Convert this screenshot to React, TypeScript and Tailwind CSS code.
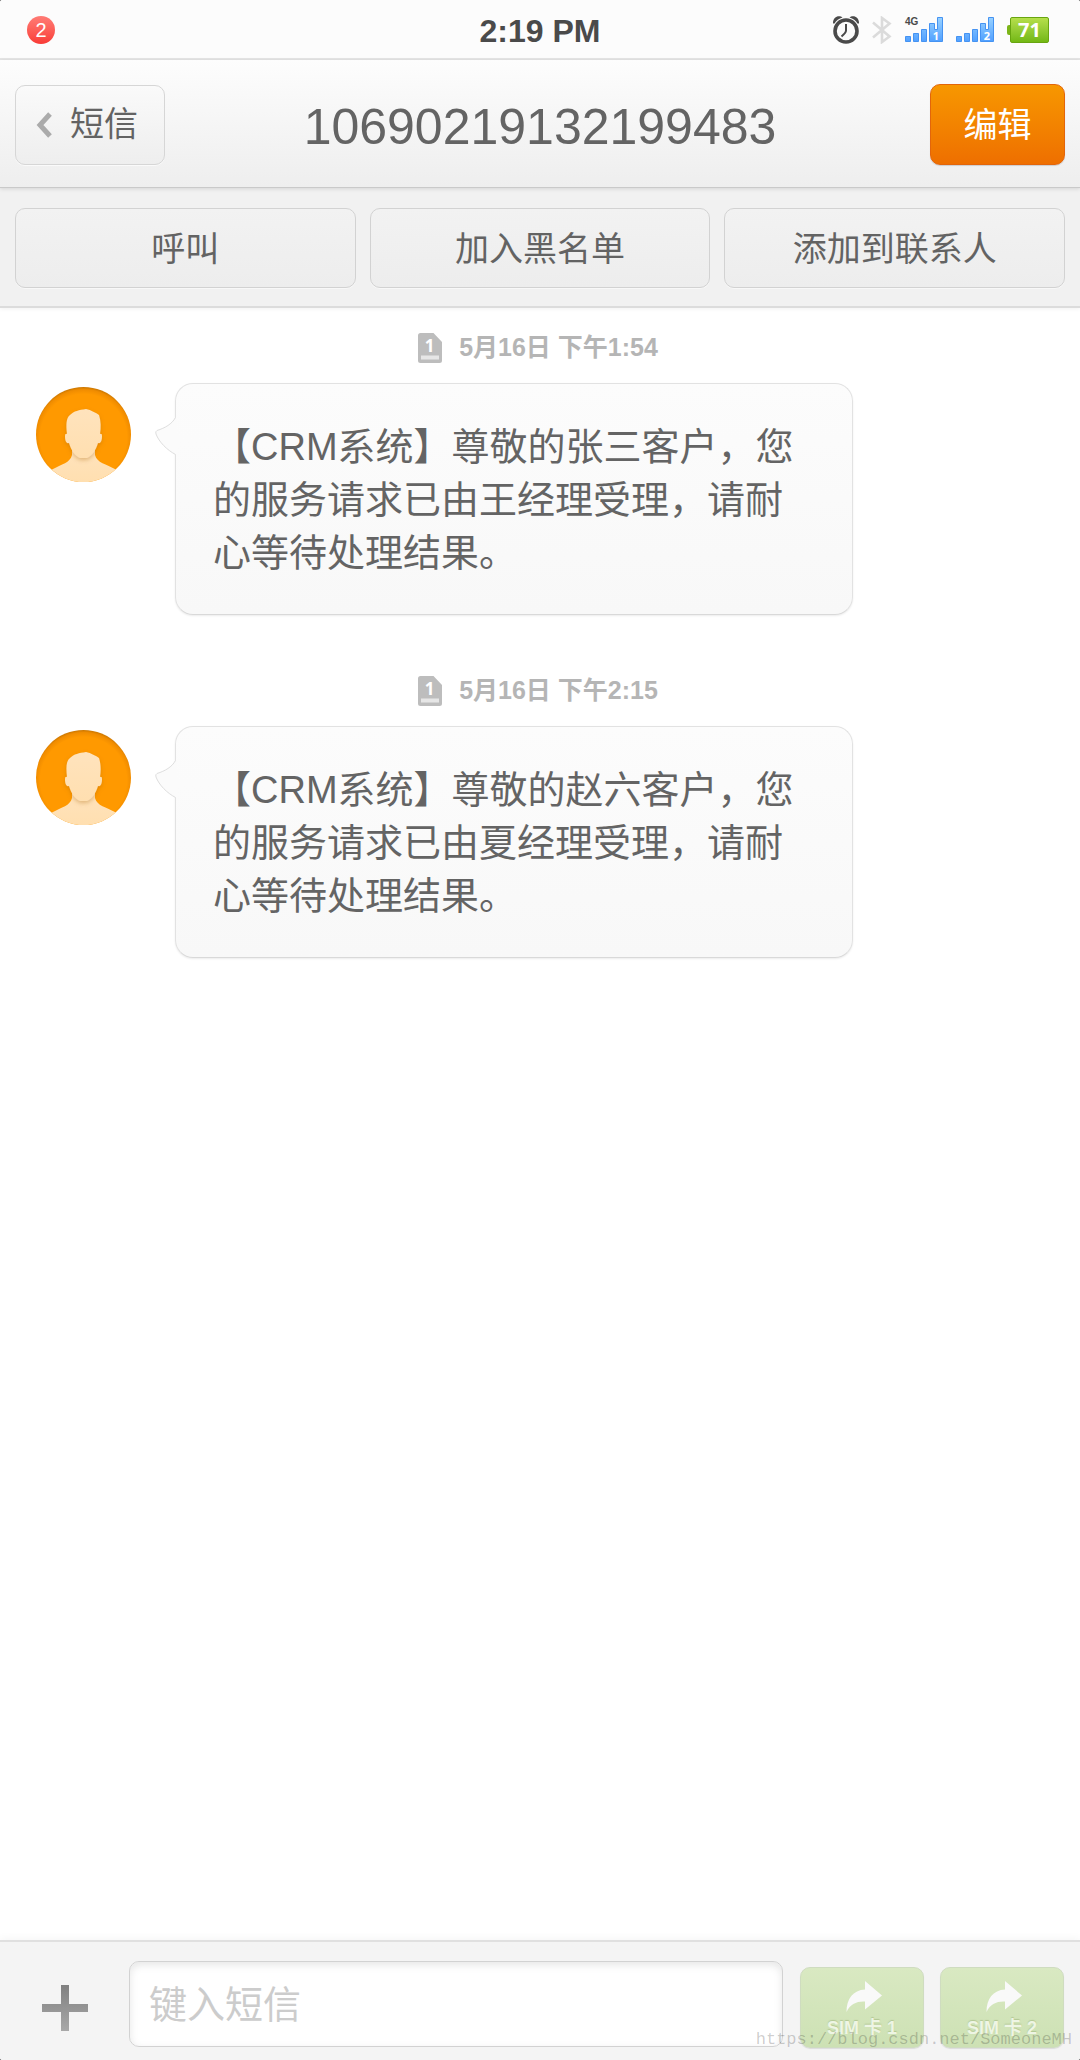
import { Fragment } from "react"

const messages = [
    {
        id: 1,
        date: "5月16日 下午1:54",
        text: "【CRM系统】尊敬的张三客户，您的服务请求已由王经理受理，请耐心等待处理结果。"
    },
    {
        id: 2,
        date: "5月16日 下午2:15",
        text: "【CRM系统】尊敬的赵六客户，您的服务请求已由夏经理受理，请耐心等待处理结果。"
    }
]

const actions = ["呼叫", "加入黑名单", "添加到联系人"]

function AlarmIcon() {
    return (
        <svg className="h-7 w-[26px]" viewBox="0 0 26 28" fill="none" stroke="#4a4a4a" aria-hidden="true">
            <path d="M0 7.5C-.3 2.5 3.5-.8 8 .6L9.500 1.500C6 2.500 3 4.500 1.500 7.500ZM26 7.500C26.300 2.500 22.500-.8 18 .6L16.500 1.500C20 2.500 23 4.500 24.500 7.500Z" fill="#4a4a4a" stroke="none" />
            <circle cx="13" cy="15" r="11" strokeWidth="3.600" />
            <path d="M13 8v6.500c0 2-1.500 3.500-4.500 6" strokeWidth="2" />
        </svg>
    )
}

function BluetoothIcon() {
    return (
        <svg className="h-7 w-5" viewBox="0 0 20 28" fill="none" stroke="#dbdbdb" strokeWidth="2.600" aria-hidden="true">
            <path d="M1 6.500L17.500 20.500L10 26V2L17.500 7.500L1 21.500" />
        </svg>
    )
}

function SignalIcon({ sim, network }: { sim: number; network?: string }) {
    return (
        <svg className="h-[26px] w-[38px] overflow-visible" viewBox="0 0 38 26" role="img" aria-label={`SIM ${sim}`}>
            <defs>
                <linearGradient id={`signal-${sim}`} x1="0" y1="0" x2="0" y2="26" gradientUnits="userSpaceOnUse">
                    <stop offset="0" stopColor="#9bd3ff" />
                    <stop offset="1" stopColor="#4c9dff" />
                </linearGradient>
            </defs>
            <path
                d="M.5 19.500h5v5h-5zM8.500 16.500h5v8h-5zM16.500 12.500h5v12h-5zM24.500 6.500h5v6h3v-12h5v24h-13z"
                fill={`url(#signal-${sim})`}
                stroke="#4593f2"
                strokeWidth="1"
            />
            <text x="31" y="23" textAnchor="middle" fill="#fff" className="font-['Noto_Sans',sans-serif] text-[11px] font-bold">{sim}</text>
            {network && <text x="0" y="8" fill="#4a4a4a" className="text-[10px] font-bold">{network}</text>}
        </svg>
    )
}

function Battery({ level }: { level: number }) {
    return (
        <div className="mr-1 flex items-center">
            <div className="h-2.5 w-[3px] rounded-l-xs bg-[#7cb518]" />
            <div className="flex h-[26px] w-[39px] items-center justify-center rounded-xs border border-[#68a510] bg-linear-to-b from-[#b5df4b] to-[#73b813] font-['Noto_Sans',sans-serif] text-[20px] font-bold text-white">
                {level}
            </div>
        </div>
    )
}

function SimIcon() {
    return (
        <svg className="h-[30px] w-6" viewBox="0 0 24 30" aria-hidden="true">
            <path d="M2.500 0H15.500L24 9V27.500A2.500 2.500 0 0 1 21.500 30H2.500A2.500 2.500 0 0 1 0 27.500V2.500A2.500 2.500 0 0 1 2.500 0Z" fill="#bdbdbd" />
            <path d="M3 22.500h18v4H3z" fill="#e6e6e6" />
            <text x="11.500" y="19" textAnchor="middle" fill="#fff" className="font-['Noto_Sans',sans-serif] text-[17px] font-bold">1</text>
        </svg>
    )
}

function Avatar() {
    return (
        <svg className="mt-1 h-[95px] w-[95px] shrink-0" viewBox="0 0 95 95" role="img" aria-label="头像">
            <defs>
                <clipPath id="avatar-clip">
                    <circle cx="47.500" cy="47.500" r="47.500" />
                </clipPath>
                <radialGradient id="avatar-bg" cx=".5" cy=".53" r=".53">
                    <stop offset=".86" stopColor="#ff9900" />
                    <stop offset=".95" stopColor="#f08c00" />
                    <stop offset="1" stopColor="#c87500" />
                </radialGradient>
                <linearGradient id="avatar-skin" x1="0" y1="0" x2="0" y2="1">
                    <stop offset="0" stopColor="#ffe3bd" />
                    <stop offset="1" stopColor="#ffdfb0" />
                </linearGradient>
                <filter id="avatar-shadow" x="-20%" y="-20%" width="140%" height="140%">
                    <feDropShadow dx="0" dy="2" stdDeviation="2" floodColor="#a86400" floodOpacity=".35" />
                </filter>
            </defs>
            <g clipPath="url(#avatar-clip)">
                <path d="M0 0h95v95H0z" fill="url(#avatar-bg)" />
                <path d="M16 82.500C26 77 34 76 36 68V60H59V68C61 76 70 77 80 82.500L84 95H10Z" fill="url(#avatar-skin)" />
                <path
                    d="M31 47C30 38 30 31 34 28C38 24 43 23 50 22C55 23 60 26 63 28C65 34 65 41 64 47Q66 46 66 49C66 53 65 57 62 56C60 63 56 69 51 71H44C39 69 35 63 33 56C30 57 29 53 29 49Q29 46 31 47Z"
                    fill="url(#avatar-skin)"
                    filter="url(#avatar-shadow)"
                />
            </g>
        </svg>
    )
}

function Bubble({ text }: { text: string }) {
    return (
        <div className="relative max-w-[678px] flex-1 rounded-[18px] border border-[#e2e2e2] border-b-[#d9d9d9] bg-linear-to-b from-[#fcfcfc] to-[#f8f8f8] px-[37px] pt-[37px] pb-[34px] shadow-[0_1px_2px_rgba(0,0,0,0.08)]">
            <svg className="absolute top-8 -left-[21px] h-10 w-[22px]" viewBox="0 0 22 40" aria-hidden="true">
                <path d="M22 1.500H20.500C17 8 10 12 2 14.500Q0 15.500 1 18C4 26 12 34 20.500 38.500H22Z" fill="#fbfbfb" />
                <path d="M20.500 1.500C17 8 10 12 2 14.500Q0 15.500 1 18C4 26 12 34 20.500 38.500" fill="none" stroke="#dedede" />
            </svg>
            <p className="text-[38px] leading-[53px] text-[#646464]">{text}</p>
        </div>
    )
}

function SendButton({ sim }: { sim: number }) {
    return (
        <button
            type="button"
            className="flex h-[81px] w-[124px] shrink-0 flex-col items-center rounded-[10px] border border-[#cfdcc0] bg-linear-to-b from-[#d9e9c2] to-[#cde1b4] pt-[13px] text-[18px] leading-6 font-bold text-[#eef5e4] shadow-[0_1px_1px_rgba(0,0,0,0.1)]"
        >
            <svg className="mb-1 ml-1 h-[31px] w-9" viewBox="0 0 36 31" aria-hidden="true">
                <path d="M19 0L36 14.500L19 28.500V20.500C11 20 4 23 .5 31C.5 18 7 9 19 8.500Z" fill="#f9f9f9" />
            </svg>
            <span className="[text-shadow:0_-1px_1px_rgba(120,150,80,0.35)]">SIM 卡 {sim}</span>
        </button>
    )
}

export default function App() {
    return (
        <div className="bg-black font-['Liberation_Sans','Noto_Sans_CJK_SC',sans-serif]">
            <div className="flex min-h-screen flex-col overflow-hidden rounded-xs bg-white">
                <div className="grid h-[60px] grid-cols-[1fr_auto_1fr] items-center border-b-2 border-[#e5e5e5] bg-[#fcfcfc] px-[27px] pt-0.5">
                    <span className="flex h-7 w-7 items-center justify-center rounded-full bg-linear-to-b from-[#ff7b75] to-[#f93a36] text-[20px] text-white">
                        2
                    </span>
                    <span className="pt-0.5 text-[32px] font-bold text-[#4a4a4a]">2:19 PM</span>
                    <div className="flex items-center justify-end gap-[13px]">
                        <AlarmIcon />
                        <BluetoothIcon />
                        <SignalIcon sim={1} network="4G" />
                        <SignalIcon sim={2} />
                        <Battery level={71} />
                    </div>
                </div>

                <header className="relative grid h-32 grid-cols-[1fr_auto_1fr] items-center border-b border-[#c9c9c9] bg-linear-to-b from-[#fdfdfd] to-[#eeeeee] px-[15px] pt-0.5 shadow-[0_1px_4px_rgba(0,0,0,0.12)]">
                    <button
                        type="button"
                        className="flex h-20 w-[150px] items-center gap-[18px] rounded-[10px] border border-[#d6d6d6] bg-linear-to-b from-[#fafafa] to-[#eeeeee] pl-5 text-[34px] text-[#636363] shadow-[0_1px_0_#fafafa]"
                    >
                        <svg className="h-[26px] w-4" viewBox="0 0 16 26" fill="none" stroke="#ababab" strokeWidth="5" aria-hidden="true">
                            <path d="M14 2L4 13L14 24" />
                        </svg>
                        短信
                    </button>
                    <h1 className="pt-1.5 text-[50px] text-[#646464]">10690219132199483</h1>
                    <button
                        type="button"
                        className="h-[81px] w-[135px] justify-self-end rounded-[10px] border border-[#e3650a] bg-linear-to-b from-[#f79700] to-[#ee6f00] pt-0.5 text-[34px] text-white shadow-[0_1px_1px_rgba(0,0,0,0.15)]"
                    >
                        编辑
                    </button>
                </header>

                <nav className="grid h-[120px] grid-cols-3 items-center gap-3.5 border-b-2 border-[#dcdcdc] bg-[#f1f1f1] px-[15px] pt-0.5 shadow-[0_1px_4px_rgba(0,0,0,0.06)]">
                    {actions.map((action) => (
                        <button
                            key={action}
                            type="button"
                            className="h-20 rounded-[10px] border border-[#d2d2d2] bg-linear-to-b from-[#f2f2f2] to-[#ededed] pt-0.5 text-[34px] text-[#636363] shadow-[0_1px_0_#f8f8f8]"
                        >
                            {action}
                        </button>
                    ))}
                </nav>

                <main className="flex-1 pt-[25px]">
                    {messages.map((message) => (
                        <Fragment key={message.id}>
                            <div className="mb-5 flex h-[30px] items-center justify-center gap-[17px] pr-1 text-[25px] font-bold text-[#b5b5b5]">
                                <SimIcon />
                                <time>{message.date}</time>
                            </div>
                            <div className="mb-[61px] flex items-start gap-11 px-9">
                                <Avatar />
                                <Bubble text={message.text} />
                            </div>
                        </Fragment>
                    ))}
                </main>

                <footer className="relative flex h-[120px] items-start border-t-2 border-[#e0e0e0] bg-[#f4f4f4] pt-[19px] pr-4 shadow-[0_-2px_8px_rgba(0,0,0,0.04)]">
                    <button type="button" aria-label="添加附件" className="flex h-[93px] w-[129px] shrink-0 items-center justify-center">
                        <svg className="h-[46px] w-[46px]" viewBox="0 0 46 46" aria-hidden="true">
                            <defs>
                                <linearGradient id="plus" x1="0" y1="0" x2="0" y2="1">
                                    <stop offset="0" stopColor="#808080" />
                                    <stop offset="1" stopColor="#a8a8a8" />
                                </linearGradient>
                            </defs>
                            <path d="M19 0h8v19h19v8H27v19h-8V27H0v-8h19z" fill="url(#plus)" />
                        </svg>
                    </button>
                    <input
                        type="text"
                        aria-label="键入短信"
                        placeholder="键入短信"
                        className="mr-[17px] h-[86px] min-w-0 flex-1 rounded-[10px] border border-[#d2d2d2] bg-white px-[19px] pt-0.5 text-[38px] text-[#646464] shadow-[inset_0_3px_8px_rgba(0,0,0,0.1)] placeholder:text-[#cccccc]"
                    />
                    <div className="flex gap-4 pt-1.5">
                        <SendButton sim={1} />
                        <SendButton sim={2} />
                    </div>
                    <span className="pointer-events-none absolute right-2 bottom-2 font-['Liberation_Mono',monospace] text-[17px] text-black/20">
                        https://blog.csdn.net/SomeoneMH
                    </span>
                </footer>
            </div>
        </div>
    )
}
